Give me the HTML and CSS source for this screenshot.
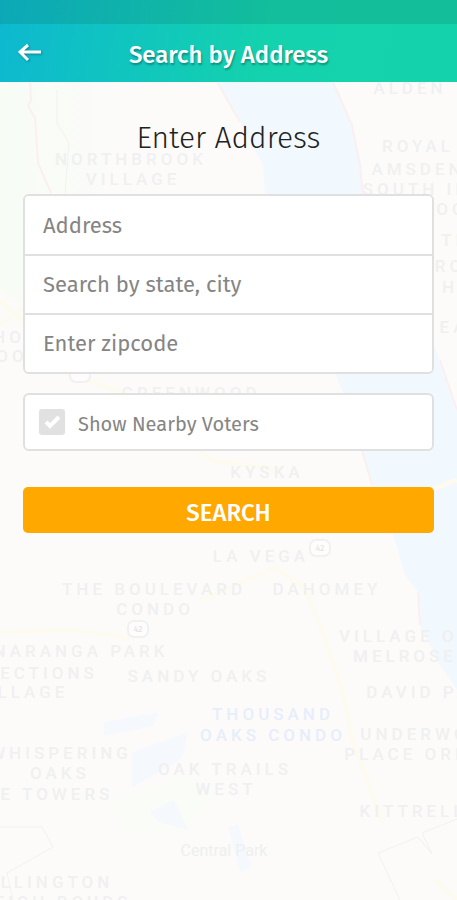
FILE: index.html
```html
<!DOCTYPE html>
<html lang="en">
<head>
    <meta charset="UTF-8">
    <meta name="viewport" content="width=device-width, initial-scale=1">
    <title>Search by Address</title>
    <link rel="stylesheet" href="styles.css">
</head>
<body>
    <header>
        <div class="status-bar"></div>
        <div class="app-bar">
            <button type="button" class="back" aria-label="Back">
                <svg width="24" height="20" viewBox="0 0 24 20"><path d="M23 10H2M10 3L2 10l8 8"/></svg>
            </button>
            <h1>Search by Address</h1>
        </div>
    </header>

    <main>
        <!-- faded map behind the form -->
        <svg class="map" viewBox="0 82 457 818" preserveAspectRatio="xMidYMin slice" aria-hidden="true">
            <defs>
                <linearGradient id="park">
                    <stop offset="0" stop-color="#f7fcf5"/>
                    <stop offset="1" stop-color="#fcfbfa"/>
                </linearGradient>
            </defs>
            <path fill="url(#park)" d="M0 82H130L100 200 60 330 0 290z"/>
            <path class="water" d="M217 82H333L352 125 360 165 363 195 440 360 457 410V690L440 665 420 625 418 592 405 575 395 540 372 485 362 450 340 385 300 290 265 195 263 165 240 122z"/>
            <path class="green" d="M112 800l75-25 30 20-30 35-65 4z"/>
            <path class="pond" d="M104 722l54-10-4 14-50 10zM132 752l56-20-6 26-50 30zM150 812l24-12 14 30-30-8zM228 828l10-4 14 44-12 4z"/>
            <path class="road" d="M0 325l25-18M0 300l24 22M62 372l60 20 90 68 70 10M0 632l75-2 55 8M200 600l75-32 30 20 18 45 20 60 10 50 30 80M430 490l27-10M435 880l22 20"/>
            <path class="border" d="M30 82l1 18-3 6 7 12 3 45 13 30M217 82l23 40M333 82l19 43 8 40 3 30M440 360l17 50M362 450l10 35M418 592l2 33"/>
            <path class="line" d="M57 90v33l12 20-4 50M0 827h42l11 20-46 26 6 27M400 900l-22-47 40-16 14 17-10-21 35-14"/>
            <g class="shield">
                <rect x="310" y="540" width="20" height="16" rx="6"/>
                <rect x="128" y="621" width="20" height="16" rx="6"/>
                <rect x="70" y="367" width="20" height="15" rx="6"/>
                <text x="320" y="551">42</text>
                <text x="138" y="632">42</text>
            </g>
            <g class="places">
                <text x="410" y="94">ALDEN</text>
                <text x="131" y="165">NORTHBROOK</text>
                <text x="133" y="185">VILLAGE</text>
                <text x="418" y="152">ROYAL</text>
                <text x="418" y="175">AMSDEN</text>
                <text x="417" y="195">SOUTH IN</text>
                <text x="452" y="215">OO</text>
                <text x="455" y="246">TE</text>
                <text x="450" y="272">RO</text>
                <text x="450" y="293">H</text>
                <text x="454" y="333">EA</text>
                <text x="9" y="343">HO</text>
                <text x="12" y="362">OO</text>
                <text x="191" y="399">GREENWOOD</text>
                <text x="267" y="478">KYSKA</text>
                <text x="261" y="562">LA VEGA</text>
                <text x="154" y="595">THE BOULEVARD</text>
                <text x="327" y="595">DAHOMEY</text>
                <text x="155" y="615">CONDO</text>
                <text x="81" y="657">NARANGA PARK</text>
                <text x="49" y="679">ECTIONS</text>
                <text x="33" y="698">LLAGE</text>
                <text x="199" y="682">SANDY OAKS</text>
                <text x="405" y="642">VILLAGE OF</text>
                <text x="405" y="662">MELROSE</text>
                <text x="419" y="698">DAVID PA</text>
                <text class="blue" x="273" y="720">THOUSAND</text>
                <text class="blue" x="273" y="741">OAKS CONDO</text>
                <text x="415" y="740">UNDERWO</text>
                <text x="409" y="760">PLACE ORM</text>
                <text x="61" y="759">WHISPERING</text>
                <text x="60" y="779">OAKS</text>
                <text x="57" y="800">E TOWERS</text>
                <text x="225" y="775">OAK TRAILS</text>
                <text x="226" y="795">WEST</text>
                <text x="413" y="817">KITTRELL</text>
                <text x="57" y="888">LLINGTON</text>
                <text x="63" y="908">EIGH BOUDS</text>
            </g>
            <text class="park-name" x="224" y="856">Central Park</text>
        </svg>

        <form>
            <h2>Enter Address</h2>
            <div class="fields">
                <input type="text" name="address" placeholder="Address" aria-label="Address">
                <input type="text" name="city" placeholder="Search by state, city" aria-label="Search by state, city">
                <input type="text" name="zipcode" placeholder="Enter zipcode" aria-label="Enter zipcode">
            </div>
            <label class="nearby">
                <span class="tick">
                    <input type="checkbox" name="nearby" checked>
                    <svg width="26" height="26" viewBox="0 0 26 26"><path d="M7 13l4 4 9-9"/></svg>
                </span>
                <span class="nearby-text">Show Nearby Voters</span>
            </label>
            <button type="submit" class="search">SEARCH</button>
        </form>
    </main>
</body>
</html>
```

FILE: styles.css
```css
* {
    box-sizing: border-box;
}

body {
    margin: 0;
    min-height: 100vh;
    display: flex;
    flex-direction: column;
    font-family: 'Fira Sans', 'Noto Sans', sans-serif;
    background: #fcfbfa;
}

header {
    background: linear-gradient(100deg, #0db8d0 0%, #14d2ad 58%, #14d3ac 100%);
}

.status-bar {
    height: 24px;
    background: rgba(10, 90, 60, 0.16);
}

.app-bar {
    height: 58px;
    display: grid;
    grid-template-columns: 60px 1fr 60px;
    align-items: center;
}

.back {
    width: 60px;
    height: 56px;
    padding: 0;
    border: none;
    background: none;
    cursor: pointer;
}

.back svg {
    fill: none;
    stroke: #fff;
    stroke-width: 3;
    filter: drop-shadow(1px 1px 1px rgba(0, 0, 0, 0.3));
}

h1 {
    margin: 0;
    padding-top: 4px;
    font-size: 24px;
    line-height: 28px;
    font-weight: 500;
    text-align: center;
    white-space: nowrap;
    color: #fff;
    text-shadow: 1px 2px 2px rgba(0, 0, 0, 0.3);
}

main {
    flex: 1;
    position: relative;
    overflow: hidden;
}

.map {
    position: absolute;
    top: 0;
    left: 0;
    width: 100%;
    height: 100%;
}

.water {
    fill: #f1f8fe;
}

.pond {
    fill: #f5f9fd;
}

.green {
    fill: #fafcf7;
}

.road,
.border,
.line {
    fill: none;
}

.road {
    stroke: #fdfbf0;
    stroke-width: 5;
}

.border {
    stroke: #fbf0ef;
    stroke-width: 2;
}

.line {
    stroke: #f5f0ee;
    stroke-width: 1;
}

.shield {
    fill: #fdfdfd;
    stroke: #f1f1f1;
    stroke-width: 2;
}

.shield text {
    fill: #e2e2e2;
    stroke: none;
    font-size: 9px;
    text-anchor: middle;
}

.places {
    font-family: Roboto, sans-serif;
    font-size: 17px;
    font-weight: 500;
    letter-spacing: 4px;
    text-anchor: middle;
    fill: #f0f0f1;
}

.places .blue {
    fill: #e6eefb;
}

.park-name {
    font-family: Roboto, sans-serif;
    font-size: 16px;
    text-anchor: middle;
    fill: #eef0ee;
}

form {
    position: relative;
    display: flex;
    flex-direction: column;
    padding: 36px 23px;
}

h2 {
    margin: 0 0 36px;
    font-size: 30px;
    line-height: 40px;
    font-weight: 300;
    text-align: center;
    color: #222;
}

.fields,
.nearby {
    border: 2px solid #e0e0e0;
    border-radius: 6px;
    background: #fff;
}

.fields {
    display: flex;
    flex-direction: column;
    overflow: hidden;
    margin-bottom: 19px;
}

.fields input {
    width: 100%;
    height: 58px;
    padding: 0 18px;
    border: none;
    background: #fff;
    font: inherit;
    font-size: 22px;
    color: #333;
}

.fields input + input {
    height: 59px;
    border-top: 2px solid #e0e0e0;
}

.fields input::placeholder {
    color: #858585;
    opacity: 1;
}

.nearby {
    height: 58px;
    display: flex;
    align-items: center;
    gap: 13px;
    margin-bottom: 36px;
    padding: 0 14px;
    font-size: 20px;
    color: #858585;
}

.nearby-text {
    padding-top: 4px;
}

.tick {
    position: relative;
    width: 26px;
    height: 26px;
}

.tick input {
    appearance: none;
    display: block;
    width: 26px;
    height: 26px;
    margin: 0;
    border-radius: 3px;
    background: #e1e1e1;
}

.tick svg {
    position: absolute;
    top: 0;
    left: 0;
    fill: none;
    stroke: #fff;
    stroke-width: 4;
    pointer-events: none;
}

.tick input:not(:checked) + svg {
    display: none;
}

.search {
    height: 46px;
    padding: 6px 0 0;
    border: none;
    border-radius: 5px;
    background: #ffa800;
    color: #fff;
    font: inherit;
    font-size: 24px;
    font-weight: 500;
    cursor: pointer;
}
```
